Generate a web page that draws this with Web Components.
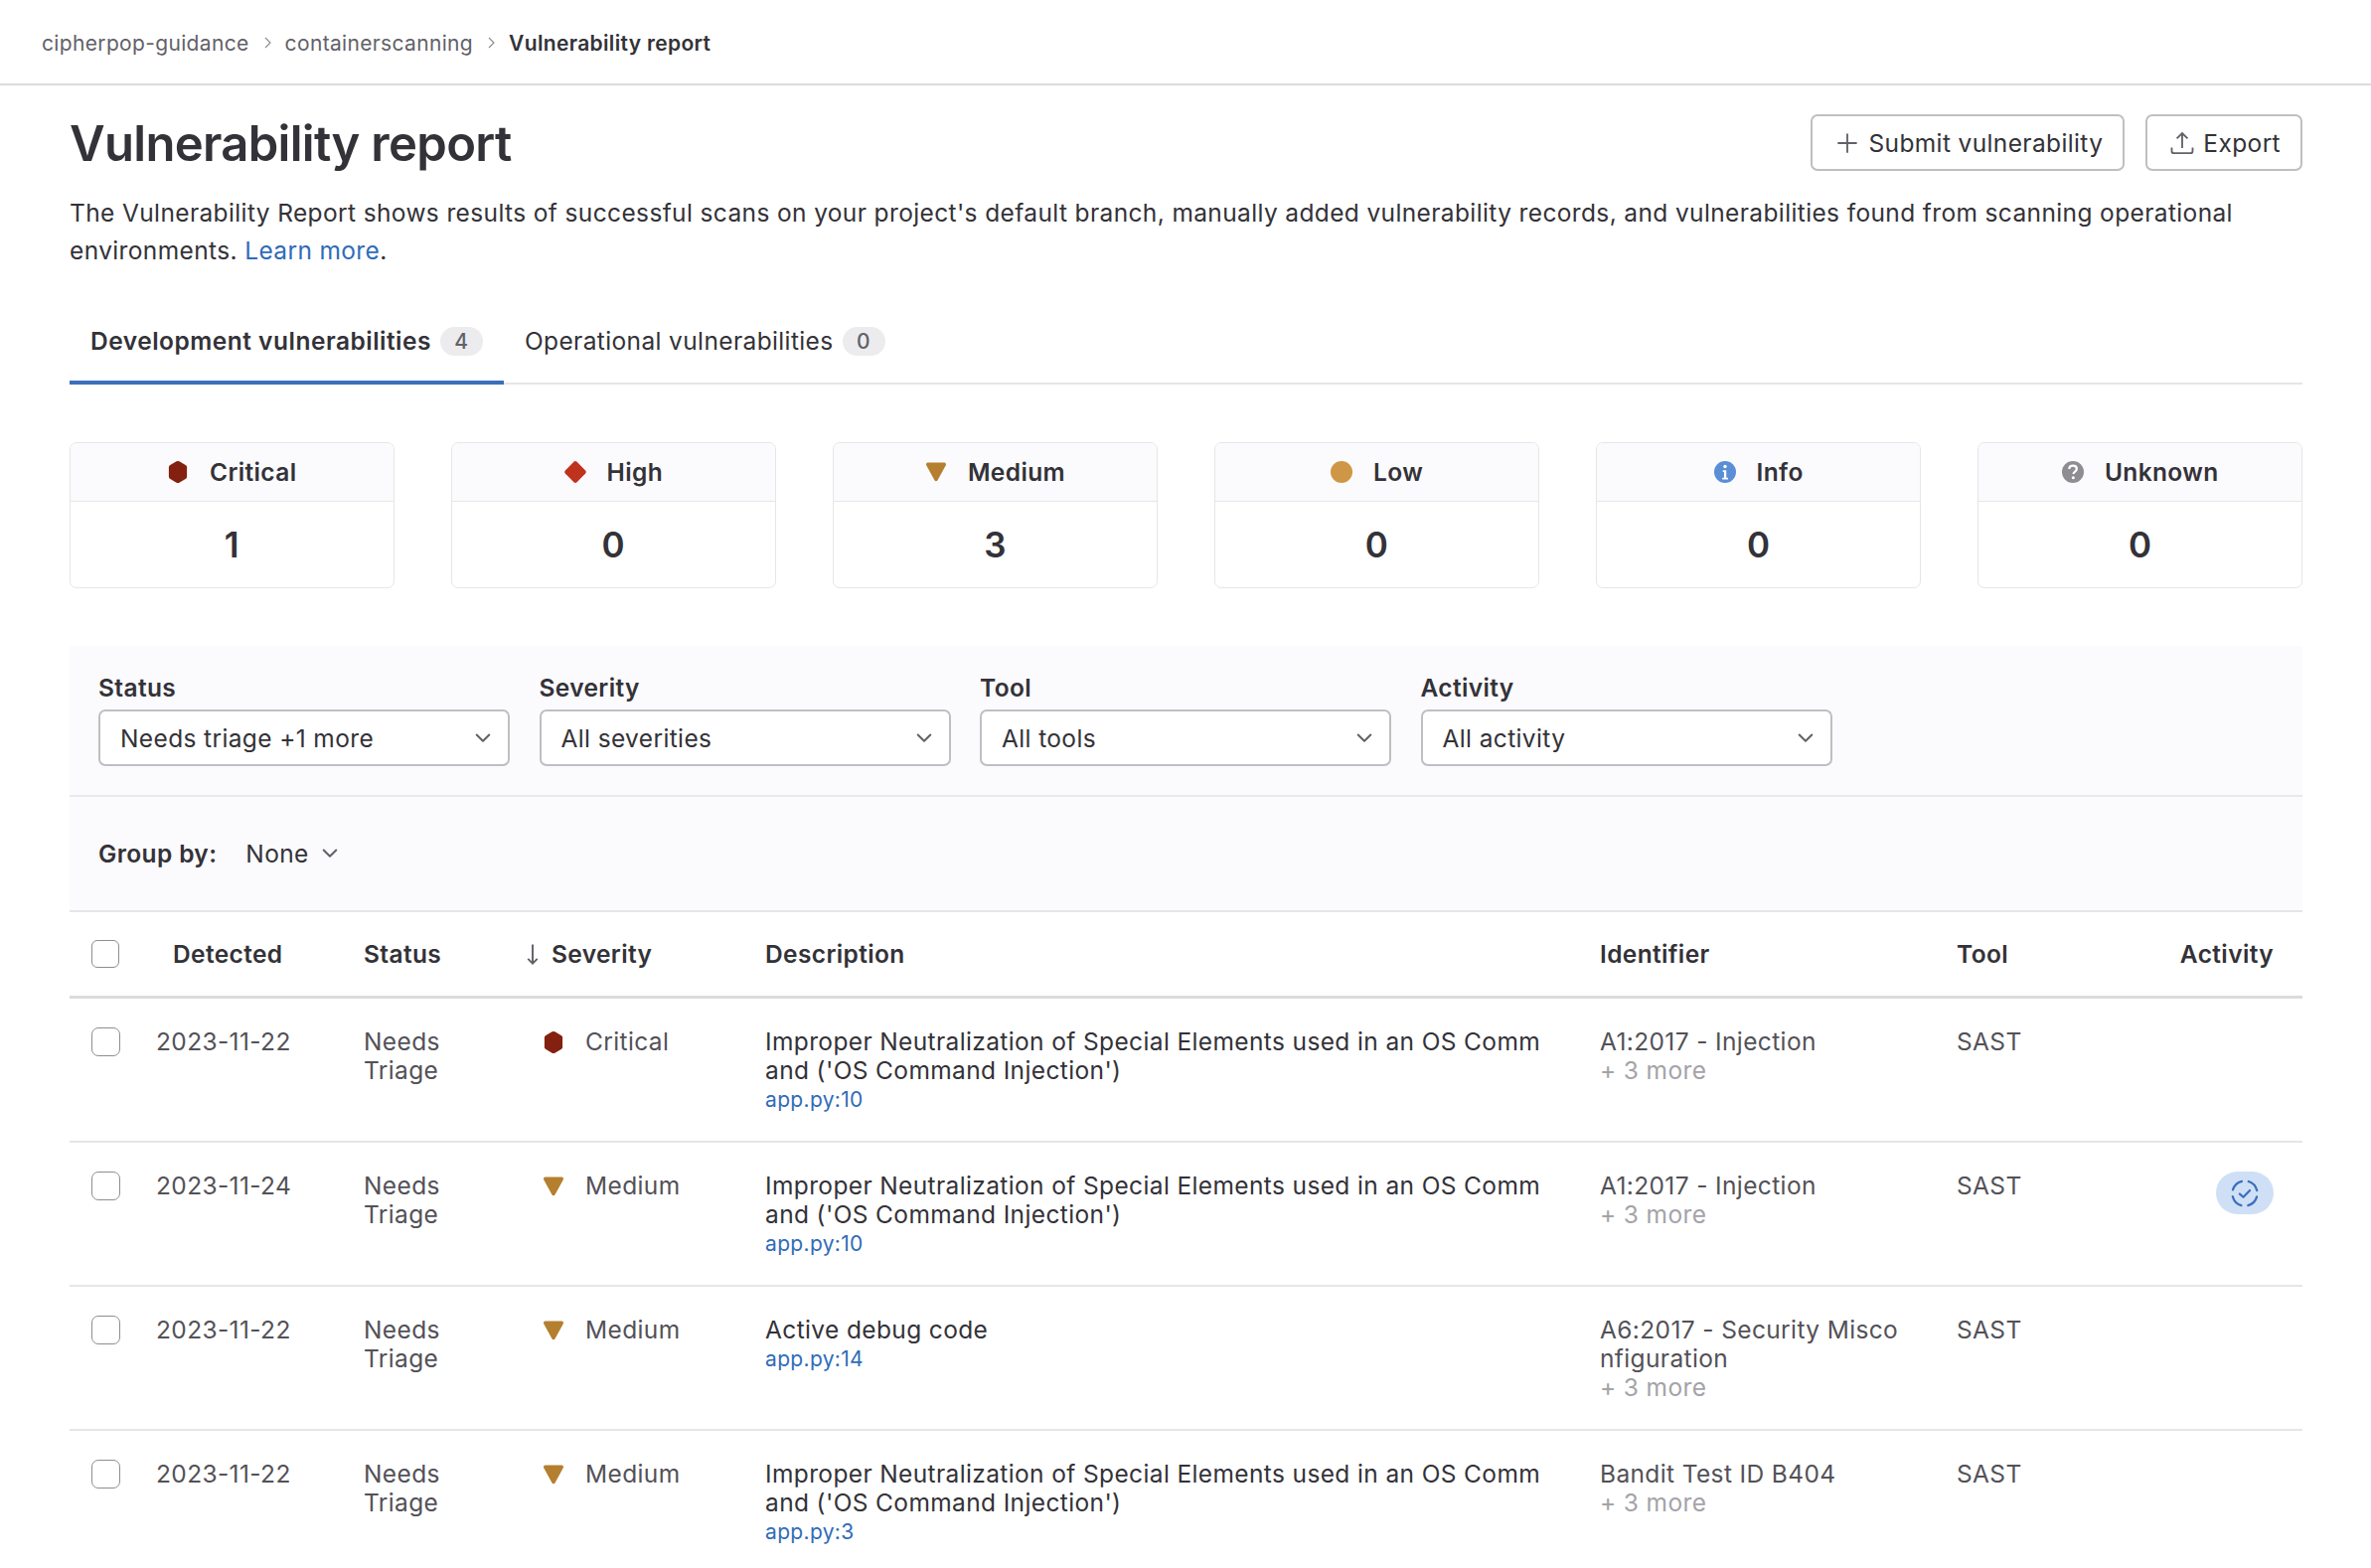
<!DOCTYPE html>
<html lang="en">
<head>
<meta charset="utf-8">
<title>Vulnerability report</title>
<style>
html,body{margin:0;padding:0;background:#fff;overflow:hidden}
body{font-family:Inter,"Noto Sans","Liberation Sans",sans-serif;font-size:24.5px;letter-spacing:.37px;color:#333238;height:1578px}
</style>
</head>
<body>
<app-breadcrumbs>
  <crumb-item>cipherpop-guidance</crumb-item>
  <crumb-item>containerscanning</crumb-item>
  <crumb-item current>Vulnerability report</crumb-item>
</app-breadcrumbs>
<page-main>
  <page-head>
    <span slot="title">Vulnerability report</span>
    <action-button icon="plus">Submit vulnerability</action-button>
    <action-button icon="export">Export</action-button>
  </page-head>
  <page-desc><span>The Vulnerability Report shows results of successful scans on your project's default branch, manually added vulnerability records, and vulnerabilities found from scanning operational</span> <span>environments.</span> <a href="#">Learn more</a><span>.</span></page-desc>
  <tab-bar>
    <tab-item active count="4">Development vulnerabilities</tab-item>
    <tab-item count="0">Operational vulnerabilities</tab-item>
  </tab-bar>
  <severity-cards>
    <severity-card kind="critical" count="1">Critical</severity-card>
    <severity-card kind="high" count="0">High</severity-card>
    <severity-card kind="medium" count="3">Medium</severity-card>
    <severity-card kind="low" count="0">Low</severity-card>
    <severity-card kind="info" count="0">Info</severity-card>
    <severity-card kind="unknown" count="0">Unknown</severity-card>
  </severity-cards>
  <filter-panel>
    <filter-select label="Status">Needs triage +1 more</filter-select>
    <filter-select label="Severity">All severities</filter-select>
    <filter-select label="Tool">All tools</filter-select>
    <filter-select label="Activity">All activity</filter-select>
  </filter-panel>
  <group-bar>None</group-bar>
  <vuln-head></vuln-head>
  <vuln-row date="2023-11-22" kind="critical" sev="Critical" file="app.py:10" tool="SAST">
    <span slot="desc">Improper Neutralization of Special Elements used in an OS Command ('OS Command Injection')</span>
    <span slot="ident">A1:2017 - Injection</span>
  </vuln-row>
  <vuln-row date="2023-11-24" kind="medium" sev="Medium" file="app.py:10" tool="SAST" activity>
    <span slot="desc">Improper Neutralization of Special Elements used in an OS Command ('OS Command Injection')</span>
    <span slot="ident">A1:2017 - Injection</span>
  </vuln-row>
  <vuln-row date="2023-11-22" kind="medium" sev="Medium" file="app.py:14" tool="SAST">
    <span slot="desc">Active debug code</span>
    <span slot="ident">A6:2017 - Security Misconfiguration</span>
  </vuln-row>
  <vuln-row date="2023-11-22" kind="medium" sev="Medium" file="app.py:3" tool="SAST" last>
    <span slot="desc">Improper Neutralization of Special Elements used in an OS Command ('OS Command Injection')</span>
    <span slot="ident">Bandit Test ID B404</span>
  </vuln-row>
</page-main>
<script>
const CHEV='<svg width="28" height="28" viewBox="0 0 16 16" fill="none" stroke="#626168" stroke-width="1.15" stroke-linecap="round" stroke-linejoin="round"><path d="M4.4 6 8 9.6 11.6 6"/></svg>';
const ICONS={
 critical:'<path fill="#84200f" d="M7.2 1.9a1.6 1.6 0 0 1 1.6 0l3.6 2.1c.5.3.8.8.8 1.4v5.2c0 .6-.3 1.1-.8 1.4l-3.6 2.1a1.6 1.6 0 0 1-1.6 0L3.6 12c-.5-.3-.8-.8-.8-1.4V5.400c0-.6.3-1.100.8-1.400z"/>',
 high:'<path fill="#bf331c" d="M7.100 2.200a1.300 1.300 0 0 1 1.800 0l4.900 4.900a1.300 1.300 0 0 1 0 1.800l-4.900 4.900a1.300 1.300 0 0 1-1.800 0L2.200 8.900a1.300 1.300 0 0 1 0-1.800z"/>',
 medium:'<path fill="#b57f30" d="M3.300 2.500h9.400c.8 0 1.300.9.9 1.600l-4.700 8.600a1 1 0 0 1-1.800 0L2.400 4.100c-.4-.7.100-1.600.9-1.600z"/>',
 low:'<circle cx="8" cy="8" r="6.300" fill="#cf9745"/>',
 info:'<circle cx="8" cy="8" r="6.300" fill="#5a8ed7"/><circle cx="8" cy="4.900" r="1" fill="#fff"/><path d="M6.700 7h2v4.300h1v1H6.400v-1h1V8H6.700z" fill="#fff"/>',
 unknown:'<circle cx="8" cy="8" r="6.300" fill="#8e8e92"/><path d="M5.900 6.300c0-1.200 1-1.900 2.200-1.900s2.100.7 2.100 1.800c0 1.600-1.900 1.500-1.900 3" fill="none" stroke="#fff" stroke-width="1.300"/><circle cx="8.200" cy="11.300" r=".9" fill="#fff"/>'
};
function sevIcon(k,size){return `<svg width="${size}" height="${size}" viewBox="0 0 16 16" style="flex:none;display:block">${ICONS[k]}</svg>`}
function def(name,css,html){
  customElements.define(name,class extends HTMLElement{
    connectedCallback(){
      if(this.shadowRoot)return;
      const r=this.attachShadow({mode:'open'});
      const h=typeof html==='function'?html(this):html;
      r.innerHTML=`<style>${css}</style>${h}`;
    }
  });
}
def('app-breadcrumbs',`:host{display:flex;align-items:center;box-sizing:border-box;height:86px;padding:2px 0 0 42px;border-bottom:2px solid #dcdcde;font-size:21px;letter-spacing:.34px;color:#626168}`,`<slot></slot>`);
def('crumb-item',`:host{display:inline-flex;align-items:center}
:host([current]){font-weight:600;color:#333238}
svg{margin:0 11px 0 11px;display:block}`,el=>el.hasAttribute('current')?'<slot></slot>':'<slot></slot><svg width="14" height="14" viewBox="0 0 14 14" fill="none" stroke="#8e8e92" stroke-width="1.200"><path d="M5 2l5 5-5 5"/></svg>');
def('page-main',`:host{display:block;margin:0 69px 0 70px}`,`<slot></slot>`);
def('page-head',`:host{display:flex;align-items:center;gap:21px;padding-top:29px}
h1{margin:0 auto 0 0;padding-top:2px;font-size:49px;font-weight:600;line-height:55px;letter-spacing:-.7px;color:#333238}`,`<h1><slot name="title"></slot></h1><slot></slot>`);
def('action-button',`:host{display:inline-flex;align-items:center;box-sizing:border-box;height:57px;padding:0 20px 0 21px;border:2px solid #bfbfc3;border-radius:7px;background:#fff;color:#333238;white-space:nowrap}
svg{display:block;margin-right:7px}`,el=>{
  const p=el.getAttribute('icon')==='plus'?'<path d="M8 2.500v11M2.500 8h11"/>':'<path d="M8 10.800V2.500M4.900 5.400 8 2.300l3.100 3.100M2 10.500V12.500c0 .8.500 1.300 1.300 1.300h9.400c.8 0 1.300-.5 1.300-1.300v-2"/>';
  return `<svg width="28" height="28" viewBox="0 0 16 16" fill="none" stroke="#626168" stroke-width="1.050">${p}</svg><slot></slot>`;
});
def('page-desc',`:host{display:block;margin-top:23px;line-height:38px;color:#333238}
::slotted(a){color:#2f6cb8;text-decoration:none}`,`<slot></slot>`);
def('tab-bar',`:host{display:flex;margin-top:28px;height:88px;box-sizing:border-box;border-bottom:2px solid #e6e6e8}`,`<slot></slot>`);
def('tab-item',`:host{display:flex;align-items:center;box-sizing:border-box;height:88px;padding:0 21px;color:#333238;white-space:nowrap}
:host([active]){font-weight:600;letter-spacing:.5px;box-shadow:inset 0 -4px 0 #3b6fbc}
b{margin-left:9px;display:block;box-sizing:border-box;min-width:43px;height:29px;line-height:29px;padding:0 10px;border-radius:15px;background:#ececef;color:#626168;font-weight:500;font-size:21px;text-align:center}`,el=>`<slot></slot><b>${el.getAttribute('count')}</b>`);
def('severity-cards',`:host{display:grid;grid-template-columns:repeat(6,1fr);column-gap:57.600px;margin-top:58px}`,`<slot></slot>`);
def('severity-card',`:host{display:block;box-sizing:border-box;height:147px;border:1.500px solid #e6e6e8;border-radius:7px;overflow:hidden;background:#fff}
.h{display:flex;align-items:center;justify-content:center;gap:18px;box-sizing:border-box;height:59px;padding-right:3px;background:#fbfafd;border-bottom:1.500px solid #e6e6e8;font-weight:600}
.n{text-align:center;font-size:35px;font-weight:600;line-height:86px;color:#333238}`,el=>`<div class="h">${sevIcon(el.getAttribute('kind'),28)}<span><slot></slot></span></div><div class="n">${el.getAttribute('count')}</div>`);
def('filter-panel',`:host{display:flex;gap:29.500px;box-sizing:border-box;height:152px;margin-top:58px;padding:26px 29px 0;background:#fbfafd;border-bottom:2px solid #e9e9eb}`,`<slot></slot>`);
def('filter-select',`:host{display:block;width:414px}
label{display:block;font-weight:600;line-height:33px;margin-bottom:5px;color:#333238}
.b{display:flex;align-items:center;justify-content:space-between;box-sizing:border-box;height:57px;padding:0 11px 0 20px;background:#fff;border:2px solid #bfbfc3;border-radius:7px;color:#333238}`,el=>`<label>${el.getAttribute('label')}</label><div class="b"><span><slot></slot></span>${CHEV}</div>`);
def('group-bar',`:host{display:flex;align-items:center;box-sizing:border-box;height:116px;padding:0 29px;background:#fbfafd;border-bottom:2px solid #e6e6e8}
b{font-weight:600;margin-right:29px}
svg{margin-left:7px}`,`<b>Group by:</b><slot></slot>${CHEV}`);
const GRID='display:grid;grid-template-columns:87px 209px 156px 248px 840px 359px 150px 1fr;';
def('vuln-head',`:host{${GRID}align-items:center;box-sizing:border-box;height:87px;border-bottom:3px solid #dcdcde;font-weight:600;color:#333238}
.c{box-sizing:border-box;width:28px;height:28px;margin-left:22px;border:1.500px solid #8e8e92;border-radius:6px;background:#fff}
.s{display:flex;align-items:center;gap:5px}
.r{text-align:right;padding-right:29px}`,`<div><div class="c"></div></div><div style="padding-left:17px">Detected</div><div>Status</div><div class="s"><svg width="28" height="28" viewBox="0 0 16 16" fill="none" stroke="#626168" stroke-width="1.100"><path d="M8 2.500v11M5.300 10.800 8 13.500l2.700-2.700"/></svg>Severity</div><div>Description</div><div>Identifier</div><div>Tool</div><div class="r">Activity</div>`);
def('vuln-row',`:host{${GRID}box-sizing:border-box;height:145px;padding-top:29px;border-bottom:2px solid #e6e6e8;line-height:29px;color:#535158}
:host([last]){border-bottom:0}
.c{box-sizing:border-box;width:29px;height:29px;margin-left:22px;border:1.500px solid #8e8e92;border-radius:7px;background:#fff}
.st{padding-right:60px}
.sev{display:flex;align-items:flex-start;gap:18px;padding-left:21px}
.sev svg{margin-top:.5px}
.d{color:#333238;word-break:break-all;padding-right:52px}
.f{display:block;font-size:21px;letter-spacing:.34px;line-height:29px;color:#2f6cb8}
.i{word-break:break-all;padding-right:47px}
.m{display:block;color:#a4a3a8}
.a{display:flex;justify-content:flex-end;padding-right:29px}
.p{display:flex;align-items:center;justify-content:center;width:58px;height:43px;margin-top:0;border-radius:22px;background:#cfe0f6}`,el=>{
  const g=n=>el.getAttribute(n);
  const act=el.hasAttribute('activity')?`<div class="p"><svg width="30" height="30" viewBox="0 0 16 16" fill="none" stroke="#3b6fbc" stroke-width="1.200" stroke-linecap="round" stroke-linejoin="round"><circle cx="8" cy="8" r="6.700" stroke-dasharray="6.800 3.725" stroke-dashoffset="-1.860"/><path d="M5.300 8.300 7.200 10l3.500-3.600"/></svg></div>`:'';
  return `<div><div class="c"></div></div><div>${g('date')}</div><div class="st">Needs Triage</div><div class="sev">${sevIcon(g('kind'),28)}<span>${g('sev')}</span></div><div class="d"><slot name="desc"></slot><span class="f">${g('file')}</span></div><div class="i"><slot name="ident"></slot><span class="m">+ 3 more</span></div><div>${g('tool')}</div><div class="a">${act}</div>`;
});
</script>
</body>
</html>
